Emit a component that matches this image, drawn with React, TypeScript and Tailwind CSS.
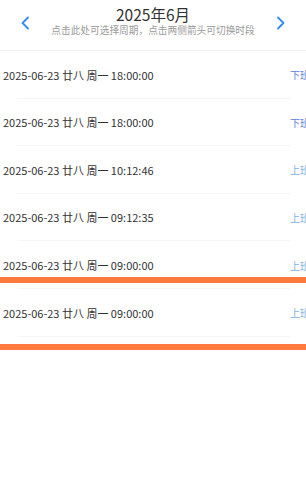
import React from "react";

const rows = [
  { t: "2025-06-23 廿八 周一 18:00:00", label: "下班", c: "text-[#5d7fd9]" },
  { t: "2025-06-23 廿八 周一 18:00:00", label: "下班", c: "text-[#5d7fd9]" },
  { t: "2025-06-23 廿八 周一 10:12:46", label: "上班", c: "text-[#7bb0e3]" },
  { t: "2025-06-23 廿八 周一 09:12:35", label: "上班", c: "text-[#7bb0e3]" },
  { t: "2025-06-23 廿八 周一 09:00:00", label: "上班", c: "text-[#7bb0e3]" },
  { t: "2025-06-23 廿八 周一 09:00:00", label: "上班", c: "text-[#7bb0e3]" },
];

function Chevron({ dir }: { dir: "l" | "r" }) {
  return (
    <svg width="12" height="14" viewBox="0 0 12 14" fill="none">
      <path
        d={dir === "l" ? "M9 1.5 L3.5 7 L9 12.5" : "M3 1.5 L8.5 7 L3 12.5"}
        stroke="#2f8bf5"
        strokeWidth="1.8"
        strokeLinecap="round"
        strokeLinejoin="round"
      />
    </svg>
  );
}

export default function App() {
  return (
    <div
      className="relative w-[306px] h-[480px] overflow-hidden bg-white"
      style={{ fontFamily: '"Noto Sans CJK SC", "Noto Sans", sans-serif' }}
    >
      <div className="flex h-[51px] items-center justify-between border-b border-[#f0f0f0] px-[19px] pb-[5px]">
        <Chevron dir="l" />
        <div className="flex flex-col items-center pb-[6px]">
          <div className="text-[15.5px] leading-[20px] text-[#333]">2025年6月</div>
          <div className="text-[9.7px] leading-[12px] text-[#9a9a9a]">点击此处可选择周期，点击两侧箭头可切换时段</div>
        </div>
        <Chevron dir="r" />
      </div>
      <div className="flex flex-col">
        {rows.map((r, i) => (
          <div key={i} className="relative flex h-[47.6px] items-center">
            <div className="pl-[3px] text-[11px] text-[#333] whitespace-nowrap">{r.t}</div>
            <div className={`absolute left-[290px] text-[10px] whitespace-nowrap ${r.c}`}>{r.label}</div>
            <div className="absolute bottom-0 left-[17px] w-[273px] h-px bg-[#f5f5f5]" />
          </div>
        ))}
      </div>
      <div className="absolute left-0 top-[277px] h-[6px] w-full bg-[#ff7a3f]" />
      <div className="absolute left-0 top-[344px] h-[6px] w-full bg-[#ff7a3f]" />
    </div>
  );
}
